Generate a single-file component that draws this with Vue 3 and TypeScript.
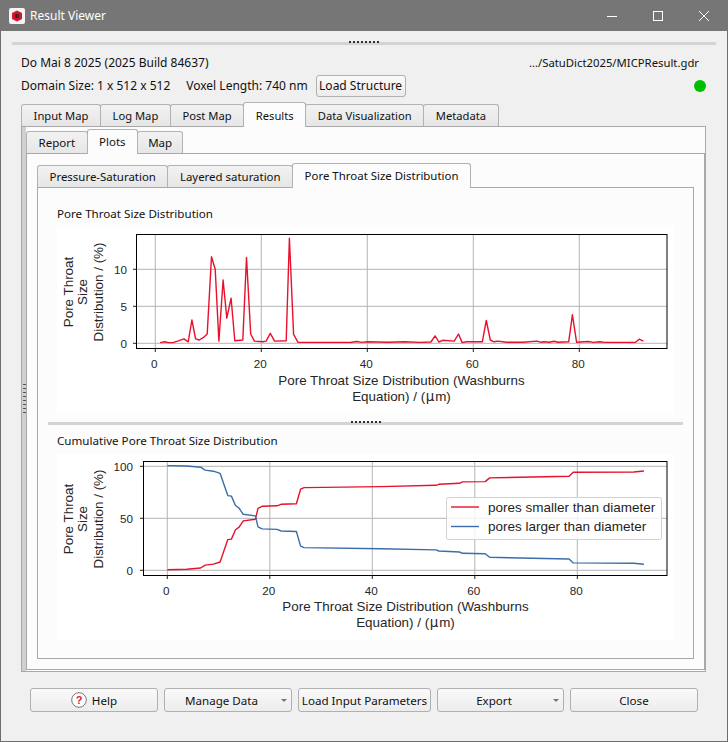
<script setup lang="ts">
import { ref } from 'vue'

type Pt = [number, number]

const topTabs = ['Input Map', 'Log Map', 'Post Map', 'Results', 'Data Visualization', 'Metadata']
const subTabs = ['Report', 'Plots', 'Map']
const plotTabs = ['Pressure-Saturation', 'Layered saturation', 'Pore Throat Size Distribution']

const activeTop = ref('Results')
const activeSub = ref('Plots')
const activePlot = ref('Pore Throat Size Distribution')

const distribution: Pt[] = [
  [0.9, 0.1], [1.8, 0.2], [2.5, 0.1], [3.3, 0.1], [4.2, 0.3], [5.4, 0.6], [6.2, 0.2], [6.9, 3.15],
  [7.6, 0.6], [8.3, 0.45], [9.1, 0.8], [9.8, 1.25], [10.6, 11.7], [11.3, 10], [12, 0.3], [12.8, 8.55],
  [13.5, 3.4], [14.3, 6.1], [15, 0.35], [16.5, 0.45], [17.2, 11.6], [18, 1.25], [18.7, 0.3], [20.2, 0.2],
  [20.9, 0.3], [21.7, 1.35], [22.5, 0.3], [24.7, 0.35], [25.3, 14.2], [26.1, 1.2], [26.9, 0.15],
  [32, 0.12], [37, 0.15], [38, 0.25], [39, 0.12], [40, 0.22], [44, 0.15], [47, 0.22], [50, 0.12],
  [52, 0.18], [52.8, 1], [53.5, 0.18], [54.2, 0.4], [56.4, 0.3], [57.2, 1.25], [57.9, 0.1], [58.7, 0.2],
  [61.7, 0.2], [62.45, 3.1], [63.2, 0.45], [63.9, 0.2], [64.6, 0.3], [66.3, 0.15], [69.4, 0.15], [72, 0.3],
  [72.7, 0.15], [73.3, 0.22], [74.4, 0.15], [75.2, 0.28], [76, 0.15], [78, 0.2], [78.7, 3.85], [79.5, 0.15],
  [81.7, 0.25], [82.6, 0.12], [83.9, 0.2], [84.8, 0.12], [90.6, 0.15], [91.3, 0.55], [92.1, 0.3],
]

const smaller: Pt[] = [
  [0, 0.6], [3.8, 1], [6.5, 2.2], [7.4, 5], [9, 6], [10.3, 8], [11, 18], [11.8, 29.5], [12.5, 30],
  [13.3, 39], [14, 41.5], [14.8, 47.5], [17.2, 49], [17.7, 59.5], [18.5, 61.5], [21.4, 62], [22.2, 63.5],
  [25.2, 64], [26, 78], [26.7, 79.5], [41.7, 80.5], [52.4, 81.7], [53, 82.7], [57, 83.7], [57.6, 85],
  [62, 85.3], [62.9, 88.8], [78.4, 90.4], [79.2, 94.2], [91, 94.5], [93, 95.5],
]
const larger: Pt[] = smaller.map(([x, y]) => [x, 101.3 - y])

const charts = [
  {
    title: 'Pore Throat Size Distribution',
    left: 79.5, top: 7.5, bottom: 121.5,
    x0: 98.3, xScale: 5.3, y0: 116.3, yScale: 7.4,
    yTicks: [0, 5, 10],
    yLabelX: 70, labelCx: 344.5, labelY: [158, 174], yCentre: 65,
    series: [{ color: '#e8112d', pts: distribution }],
    legend: false,
  },
  {
    title: 'Cumulative Pore Throat Size Distribution',
    left: 86.5, top: 7.5, bottom: 121.5,
    x0: 110.3, xScale: 5.125, y0: 116.3, yScale: 1.04,
    yTicks: [0, 50, 100],
    yLabelX: 76, labelCx: 348.5, labelY: [157, 173], yCentre: 65,
    series: [{ color: '#e8112d', pts: smaller }, { color: '#3b6cab', pts: larger }],
    legend: true,
  },
]
const xTicks = [0, 20, 40, 60, 80]
const right = 610

function linePath(pts: Pt[], c: (typeof charts)[number]): string {
  return pts
    .map(([x, y], i) => `${i ? 'L' : 'M'}${(c.x0 + x * c.xScale).toFixed(1)} ${(c.y0 - y * c.yScale).toFixed(1)}`)
    .join(' ')
}
</script>

<template>
  <div class="window">
    <header class="titlebar">
      <svg class="app-icon" width="16" height="16" viewBox="0 0 16 16">
        <rect width="16" height="16" rx="2" fill="#f4f4f4" />
        <path d="M8 2.5 13 5v6l-5 2.5L3 11V5z" fill="#d3152b" />
        <circle cx="8" cy="8" r="2.2" fill="#4a2024" />
      </svg>
      <span class="title">Result Viewer</span>
      <div class="controls">
        <svg width="10" height="10" viewBox="0 0 10 10"><path d="M0 5.5h10" stroke="#fff" /></svg>
        <svg width="10" height="10" viewBox="0 0 10 10"><rect x=".5" y=".5" width="9" height="9" fill="none" stroke="#fff" /></svg>
        <svg width="10" height="10" viewBox="0 0 10 10"><path d="M0 0l10 10M10 0 0 10" stroke="#fff" /></svg>
      </div>
    </header>

    <main class="body">
      <div class="splitter top-splitter"><span class="grip"></span></div>

      <div class="info">
        <div class="info-row row-one">
          <span>Do Mai 8 2025 (2025 Build 84637)</span>
          <span class="path">.../SatuDict2025/MICPResult.gdr</span>
        </div>
        <div class="info-row row-two">
          <span>Domain Size: 1 x 512 x 512</span>
          <span class="voxel">Voxel Length: 740 nm</span>
          <button class="btn small">Load Structure</button>
          <i class="status"></i>
        </div>
      </div>

      <div class="tabs top-tabs">
        <button v-for="t in topTabs" :key="t" class="tab" :class="{ active: t === activeTop }" @click="activeTop = t">{{ t }}</button>
      </div>
      <section class="pane outer-pane">
        <div class="v-splitter"><span class="v-grip"></span></div>
        <div class="sub-wrap">
          <div class="tabs sub-tabs">
            <button v-for="t in subTabs" :key="t" class="tab" :class="{ active: t === activeSub }" @click="activeSub = t">{{ t }}</button>
          </div>
          <section class="pane sub-pane">
            <div class="tabs plot-tabs">
              <button v-for="t in plotTabs" :key="t" class="tab" :class="{ active: t === activePlot }" @click="activePlot = t">{{ t }}</button>
            </div>
            <section class="pane plot-pane">
              <template v-for="(c, n) in charts" :key="c.title">
                <div v-if="n" class="splitter mid-splitter"><span class="grip"></span></div>
                <div class="plot-block">
                  <h4 class="plot-title">{{ c.title }}</h4>
                  <svg class="chart" width="617" height="186" viewBox="0 0 617 186">
                    <g stroke="#b4b4b4" stroke-width="1">
                      <line v-for="v in xTicks" :key="v" :x1="c.x0 + v * c.xScale" :x2="c.x0 + v * c.xScale" :y1="c.top" :y2="c.bottom" />
                      <line v-for="v in c.yTicks" :key="v" :x1="c.left" :x2="right" :y1="c.y0 - v * c.yScale" :y2="c.y0 - v * c.yScale" />
                    </g>
                    <path v-for="s in c.series" :key="s.color" :d="linePath(s.pts, c)" fill="none" :stroke="s.color" stroke-width="1.4" stroke-linejoin="round" />
                    <rect :x="c.left" :y="c.top" :width="right - c.left" :height="c.bottom - c.top" fill="none" stroke="#000" />
                    <g stroke="#222">
                      <line v-for="v in xTicks" :key="v" :x1="c.x0 + v * c.xScale" :x2="c.x0 + v * c.xScale" :y1="c.bottom" :y2="c.bottom + 3.5" />
                      <line v-for="v in c.yTicks" :key="v" :x1="c.left - 3.5" :x2="c.left" :y1="c.y0 - v * c.yScale" :y2="c.y0 - v * c.yScale" />
                    </g>
                    <g class="tick-text">
                      <text v-for="v in xTicks" :key="v" :x="c.x0 + v * c.xScale - 1" y="141" text-anchor="middle">{{ v }}</text>
                      <text v-for="v in c.yTicks" :key="v" :x="c.yLabelX" :y="c.y0 - v * c.yScale + 4.5" text-anchor="end">{{ v }}</text>
                    </g>
                    <g class="axis-text">
                      <text :x="c.labelCx" :y="c.labelY[0]" text-anchor="middle">Pore Throat Size Distribution (Washburns</text>
                      <text :x="c.labelCx" :y="c.labelY[1]" text-anchor="middle">Equation) / (<tspan class="mu" dx=".5">µ</tspan>m)</text>
                      <text :transform="`translate(16 ${c.yCentre}) rotate(-90)`" text-anchor="middle">Pore Throat</text>
                      <text :transform="`translate(30 ${c.yCentre}) rotate(-90)`" text-anchor="middle">Size</text>
                      <text :transform="`translate(46 ${c.yCentre}) rotate(-90)`" text-anchor="middle">Distribution / (%)</text>
                    </g>
                    <g v-if="c.legend" class="legend">
                      <rect x="389.5" y="43.5" width="215" height="42" rx="2" fill="#fff" fill-opacity=".8" stroke="#d2d2d2" />
                      <line x1="394" x2="422" y1="53" y2="53" stroke="#e8112d" stroke-width="1.4" />
                      <line x1="394" x2="422" y1="72.5" y2="72.5" stroke="#3b6cab" stroke-width="1.4" />
                      <text x="431" y="57.5">pores smaller than diameter</text>
                      <text x="431" y="77">pores larger than diameter</text>
                    </g>
                  </svg>
                </div>
              </template>
            </section>
          </section>
        </div>
      </section>

      <footer class="actions">
        <button class="btn">
          <svg width="16" height="16" viewBox="0 0 16 16">
            <circle cx="8" cy="8" r="7.3" fill="#fff" stroke="#777" />
            <text x="8" y="12" text-anchor="middle" class="help-mark">?</text>
          </svg>
          Help
        </button>
        <button class="btn combo">Manage Data<i class="caret"></i></button>
        <button class="btn load">Load Input Parameters</button>
        <button class="btn combo">Export<i class="caret"></i></button>
        <button class="btn">Close</button>
      </footer>
    </main>
  </div>
</template>

<style>
html, body { margin: 0; background: #f0f0f0; }
</style>

<style scoped>
.window {
  width: 728px;
  height: 742px;
  box-sizing: border-box;
  display: flex;
  flex-direction: column;
  border: 1px solid #6e6e6e;
  border-top: 0;
  background: #f0f0f0;
  font: 12px "Noto Sans", sans-serif;
  color: #111;
}
.titlebar {
  height: 31px;
  flex: none;
  margin: 0 -1px;
  display: flex;
  align-items: center;
  padding: 0 19px 0 9px;
  background: #767676;
  color: #fff;
}
.title { margin-left: 5px; }
.controls { margin-left: auto; display: flex; gap: 36px; }
.body { flex: 1; min-height: 0; display: flex; flex-direction: column; padding: 11px 11px 0 20px; }
.splitter { height: 3px; background: #d4d4d4; flex: none; position: relative; }
.top-splitter { margin: 0 0 0 -9px; }
.mid-splitter { margin: 0 10px; }
.grip {
  position: absolute;
  left: 50%;
  top: -1px;
  width: 30px;
  height: 2px;
  margin-left: -15px;
  background: repeating-linear-gradient(90deg, #333 0 2px, transparent 2px 4px);
}
.info { padding-top: 6px; }
.info-row { display: flex; align-items: center; }
.row-one { justify-content: space-between; height: 23px; padding-right: 17px; }
.path { font-size: 11.3px; }
.row-two { height: 23px; }
.voxel { margin-left: 16px; }
.status {
  width: 12px;
  height: 12px;
  margin: 0 10px 0 auto;
  border-radius: 50%;
  background: #00bf00;
}
.btn {
  font: inherit;
  font-size: 11.6px;
  color: inherit;
  height: 24px;
  border: 1px solid #b0b0b0;
  border-radius: 3px;
  background: linear-gradient(#fafafa, #ececec);
  padding: 0;
  display: flex;
  align-items: center;
  justify-content: center;
  gap: 5px;
  position: relative;
}
.small { height: 22px; width: 90px; margin-left: 8px; font-size: 12px; }
.tabs { display: flex; align-items: flex-end; flex: none; height: 24px; }
.tab {
  font: inherit;
  color: inherit;
  height: 22px;
  padding: 0 11.5px;
  border: 1px solid #b2b2b2;
  border-bottom: 0;
  border-radius: 3px 3px 0 0;
  background: linear-gradient(#f2f2f2, #e6e6e6);
  margin-right: -1px;
}
.tab.active {
  height: 25px;
  background: #fcfcfc;
  padding-bottom: 2px;
  position: relative;
  z-index: 1;
  margin-bottom: -1px;
}
.top-tabs { margin-top: 5px; font-size: 11.2px; }
.top-tabs .tab { padding: 0 11.6px; }
.sub-tabs { font-size: 11.5px; }
.sub-tabs .tab:last-child { padding: 0 10px; }
.plot-tabs { font-size: 11.45px; }
.pane { border: 1px solid #a8a8a8; background: #fcfcfc; }
.outer-pane { height: 546px; box-sizing: border-box; flex: none; display: flex; margin-right: 10px; }
.v-splitter { width: 4px; flex: none; background: #d0d0d0; position: relative; }
.v-grip {
  position: absolute;
  top: 50%;
  left: .5px;
  width: 3px;
  height: 30px;
  margin-top: -15px;
  background: repeating-linear-gradient(#555 0 1.4px, transparent 1.4px 4px);
}
.sub-wrap { flex: 1; min-width: 0; display: flex; flex-direction: column; padding: 2px 0 1px; }
.sub-pane { flex: 1; min-height: 0; padding: 9px 10px 10px; display: flex; flex-direction: column; }
.plot-pane { flex: 1; min-height: 0; display: flex; flex-direction: column; padding-top: 10px; }
.plot-block { padding: 0 19px; }
.plot-title { margin: 0; height: 29px; font-size: 11.6px; font-weight: 400; line-height: 32px; }
.chart { display: block; background: #fff; font-family: "Liberation Sans", Arial, sans-serif; margin-bottom: 9px; }
.tick-text text { font-size: 11.7px; fill: #262626; }
.axis-text text { font-size: 13.4px; fill: #262626; }
.mu { font-family: "DejaVu Sans", sans-serif; letter-spacing: 1px; }
.legend text { font-size: 13.5px; fill: #1e1e1e; }
.help-mark { font: 700 11px "Liberation Sans", sans-serif; fill: #e0182d; }
.actions { display: grid; grid-template-columns: 128px 128px 133px 127px 128px; gap: 6px; margin: 16px 18px 0 9px; }
.combo { padding-right: 13px; }
.caret {
  position: absolute;
  right: 4px;
  top: 10px;
  border: 3px solid transparent;
  border-top: 3px solid #777;
  border-bottom: 0;
}
</style>
